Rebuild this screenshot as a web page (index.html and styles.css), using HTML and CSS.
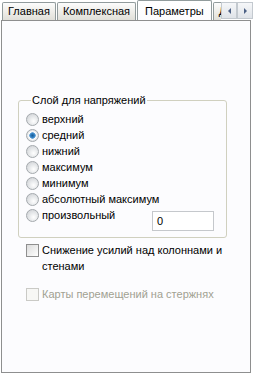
FILE: index.html
```html
<!DOCTYPE html>
<html lang="ru">
<head>
    <meta charset="UTF-8" />
    <title>Параметры</title>
    <link rel="stylesheet" href="styles.css">
</head>
<body>

<div class="tab-strip">
    <div class="tab-list">
        <div class="tab">Главная</div>
        <div class="tab">Комплексная</div>
        <div class="tab active">Параметры</div>
        <div class="tab">Дополнительно</div>
    </div>
    <div class="tab-scroll">
        <span class="scroll-btn"><i class="arrow left"></i></span>
        <span class="scroll-btn"><i class="arrow right"></i></span>
    </div>
</div>

<div class="panel">

    <fieldset class="group">
        <legend>Слой для напряжений</legend>
        <div class="radio-row"><span class="radio"></span>верхний</div>
        <div class="radio-row"><span class="radio checked"></span>средний</div>
        <div class="radio-row"><span class="radio"></span>нижний</div>
        <div class="radio-row"><span class="radio"></span>максимум</div>
        <div class="radio-row"><span class="radio"></span>минимум</div>
        <div class="radio-row"><span class="radio"></span>абсолютный максимум</div>
        <div class="radio-row custom">
            <span class="radio-label"><span class="radio"></span>произвольный</span>
            <span class="edit">0</span>
        </div>
    </fieldset>

    <div class="check-row">
        <span class="check"></span>
        <span class="check-text">Снижение усилий над колоннами и стенами</span>
    </div>

    <div class="check-row disabled">
        <span class="check"></span>
        <span class="check-text">Карты перемещений на стержнях</span>
    </div>

</div>

</body>
</html>
```

FILE: styles.css
```css
* {
    box-sizing: border-box;
}

html, body {
    margin: 0;
    padding: 0;
    background: #ffffff;
    font-family: 'Liberation Sans', Arial, sans-serif;
    font-size: 11px;
    color: #000000;
}

/* =========================
   TABS
========================= */
.tab-strip {
    display: flex;
    height: 20px;
    width: 254px;
}

.tab-list {
    flex: 1;
    display: flex;
    align-items: flex-end;
    padding-left: 2px;
    overflow: hidden;
}

.tab {
    flex-shrink: 0;
    height: 18px;
    line-height: 17px;
    padding: 0 5px;
    border: 1px solid #919b9c;
    border-bottom: none;
    border-radius: 2px 2px 0 0;
    background: linear-gradient(#fcfcfc, #ecebe6 60%, #e0dfd9);
    white-space: nowrap;
}

.tab + .tab {
    margin-left: 1px;
}

.tab.active {
    position: relative;
    z-index: 2;
    height: 21px;
    line-height: 20px;
    margin-bottom: -1px;
    padding: 0 7px;
    background: linear-gradient(#ffffff, #fcfcfe);
}

.tab-scroll {
    display: flex;
    padding-top: 2px;
    padding-right: 1px;
}

.scroll-btn {
    display: flex;
    align-items: center;
    justify-content: center;
    width: 16px;
    height: 17px;
    border: 1px solid #c3c9cf;
    background: linear-gradient(#f6f7f9, #dfe3e8);
}

.arrow {
    width: 0;
    height: 0;
    border-top: 3px solid transparent;
    border-bottom: 3px solid transparent;
}

.arrow.left { border-right: 3px solid #4d6185; }
.arrow.right { border-left: 3px solid #4d6185; }

/* =========================
   PANEL
========================= */
.panel {
    width: 250px;
    height: 353px;
    margin-left: 1px;
    padding-top: 73px;
    border: 1px solid #8e8f8f;
    background: #fcfcfe;
}

.group {
    width: 209px;
    margin: 0 0 0 16px;
    padding: 4px 0 6px 7px;
    border: 1px solid #d0d0bf;
    border-radius: 3px;
}

.group legend {
    padding: 0 1px;
    margin-left: 5px;
    line-height: 13px;
}

.radio-row {
    display: flex;
    align-items: center;
    height: 16px;
}

.radio {
    width: 13px;
    height: 13px;
    margin-right: 3px;
    border-radius: 50%;
    border: 1px solid #a4a9ad;
    background: radial-gradient(circle at 60% 65%, #ffffff, #e6e8ea 45%, #c9ccd0);
}

.radio.checked {
    background: radial-gradient(circle, #1b5b93 0, #2f7fc2 2px, #6fa8d8 3px, #ffffff 3.5px, #e6e8ea 5px, #c9ccd0);
}

.radio-row.custom {
    height: 24px;
    align-items: flex-start;
}

.radio-label {
    display: flex;
    align-items: center;
    height: 16px;
}

.edit {
    width: 62px;
    height: 20px;
    margin: 4px 0 0 auto;
    margin-right: 12px;
    padding-left: 4px;
    line-height: 18px;
    border: 1px solid #c5c8cc;
    background: #ffffff;
}

/* =========================
   CHECKBOXES
========================= */
.check-row {
    display: flex;
    align-items: flex-start;
    margin: 4px 0 0 24px;
    line-height: 16px;
}

.check {
    flex-shrink: 0;
    width: 13px;
    height: 13px;
    margin: 2px 3px 0 0;
    border: 1px solid #8f8f8f;
    background: linear-gradient(135deg, #dcdcdc, #f4f4f4 70%, #ffffff);
}

.check-text {
    width: 185px;
}

.check-row.disabled {
    margin-top: 12px;
    color: #a1a192;
}

.check-row.disabled .check {
    border-color: #cacac6;
    background: #f7f7f5;
}
```
